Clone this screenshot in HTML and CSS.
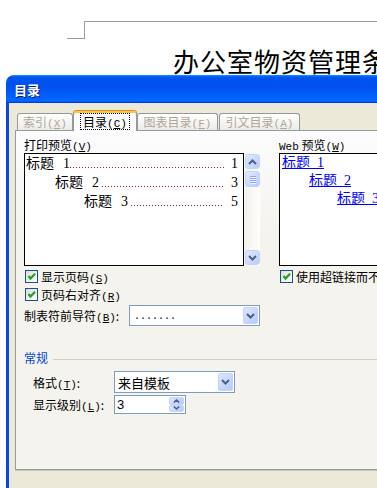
FILE: index.html
```html
<!DOCTYPE html>
<html lang="zh-CN">
<head>
<meta charset="utf-8">
<title>目录</title>
<link rel="stylesheet" href="styles.css">
</head>
<body>
<div class="doc">
  <div class="crop"><div class="crop-corner"></div><div class="crop-line"></div></div>
  <h1 class="doc-title">办公室物资管理条例</h1>
</div>
<div class="dialog">
  <div class="titlebar">目录</div>
  <div class="dlg-body">
    <div class="tabs">
      <div class="tab t1">索引<span class="key">(<u>X</u>)</span></div>
      <div class="tab active"><span class="focus">目录<span class="key">(<u>C</u>)</span></span></div>
      <div class="tab t3">图表目录<span class="key">(<u>F</u>)</span></div>
      <div class="tab t4">引文目录<span class="key">(<u>A</u>)</span></div>
    </div>
    <div class="panel">
      <div class="cols">
        <div class="col-left">
          <div class="label">打印预览<span class="key">(<u>V</u>)</span></div>
          <div class="preview-row">
            <div class="preview">
              <div class="toc l1"><span class="h">标题</span><span class="n">1</span><span class="lead"></span><span class="pg">1</span></div>
              <div class="toc l2"><span class="h">标题</span><span class="n">2</span><span class="lead sp"></span><span class="pg">3</span></div>
              <div class="toc l3"><span class="h">标题</span><span class="n">3</span><span class="lead sp"></span><span class="pg">5</span></div>
            </div>
            <div class="scrollbar">
              <div class="sb-btn"><svg width="9" height="6" viewBox="0 0 9 6"><polyline points="1,5 4.5,1.5 8,5" fill="none" stroke="#4D6185" stroke-width="2"/></svg></div>
              <div class="sb-thumb"><span></span><span></span><span></span><span></span></div>
              <div class="sb-btn sb-down"><svg width="9" height="6" viewBox="0 0 9 6"><polyline points="1,1 4.5,4.5 8,1" fill="none" stroke="#4D6185" stroke-width="2"/></svg></div>
            </div>
          </div>
          <div class="check first">
            <span class="cb"><svg width="11" height="11" viewBox="0 0 11 11"><polyline points="2.5,5 4.5,7.5 9,2.8" fill="none" stroke="#21A121" stroke-width="2.2"/></svg></span>
            <span>显示页码<span class="key">(<u>S</u>)</span></span>
          </div>
          <div class="check">
            <span class="cb"><svg width="11" height="11" viewBox="0 0 11 11"><polyline points="2.5,5 4.5,7.5 9,2.8" fill="none" stroke="#21A121" stroke-width="2.2"/></svg></span>
            <span>页码右对齐<span class="key">(<u>R</u>)</span></span>
          </div>
          <div class="field-row">
            <span class="field-label">制表符前导符<span class="key">(<u>B</u>)</span>:</span>
            <div class="combo combo-leader">
              <span class="combo-text dots">.......</span>
              <span class="combo-btn"><svg width="9" height="6" viewBox="0 0 9 6"><polyline points="1,1 4.5,4.5 8,1" fill="none" stroke="#4D6185" stroke-width="2"/></svg></span>
            </div>
          </div>
        </div>
        <div class="vsep"></div>
        <div class="col-right">
          <div class="label"><span class="mono">Web</span> 预览<span class="key">(<u>W</u>)</span></div>
          <div class="web-preview">
            <div class="web w1"><span class="link">标题&nbsp;&nbsp;1</span></div>
            <div class="web w2"><span class="link">标题&nbsp;&nbsp;2</span></div>
            <div class="web w3"><span class="link">标题&nbsp;&nbsp;3</span></div>
          </div>
          <div class="check first">
            <span class="cb"><svg width="11" height="11" viewBox="0 0 11 11"><polyline points="2.5,5 4.5,7.5 9,2.8" fill="none" stroke="#21A121" stroke-width="2.2"/></svg></span>
            <span>使用超链接而不使用页码<span class="key">(<u>H</u>)</span></span>
          </div>
        </div>
      </div>
      <div class="group">
        <div class="group-head"><span class="group-title">常规</span><span class="rule"></span></div>
        <div class="form-row r1">
          <span class="flabel">格式<span class="key">(<u>T</u>)</span>:</span>
          <div class="combo combo-format">
            <span class="combo-text big">来自模板</span>
            <span class="combo-btn"><svg width="9" height="6" viewBox="0 0 9 6"><polyline points="1,1 4.5,4.5 8,1" fill="none" stroke="#4D6185" stroke-width="2"/></svg></span>
          </div>
        </div>
        <div class="form-row r2">
          <span class="flabel">显示级别<span class="key">(<u>L</u>)</span>:</span>
          <div class="combo spin">
            <span class="combo-text num">3</span>
            <span class="spin-btns">
              <span class="spin-btn"><svg width="7" height="4" viewBox="0 0 7 4"><polyline points="0.8,3.5 3.5,1 6.2,3.5" fill="none" stroke="#4D6185" stroke-width="1.6"/></svg></span>
              <span class="spin-btn"><svg width="7" height="4" viewBox="0 0 7 4"><polyline points="0.8,0.5 3.5,3 6.2,0.5" fill="none" stroke="#4D6185" stroke-width="1.6"/></svg></span>
            </span>
          </div>
        </div>
      </div>
    </div>
  </div>
</div>
</body>
</html>
```
FILE: styles.css
```css
* { box-sizing: border-box; }
html, body { margin: 0; padding: 0; overflow: hidden; }
body {
  width: 377px;
  height: 488px;
  background: #fff;
  font-family: "Noto Sans CJK SC", sans-serif;
  font-size: 12px;
  color: #000;
}
u { text-decoration: underline; }
.key { font-family: "Liberation Mono", "Noto Sans CJK SC", monospace; font-size: 11px; }
.mono { font-family: "Liberation Mono", monospace; font-size: 11px; }

/* document behind the dialog */
.doc { height: 75px; }
.crop { display: flex; padding: 21px 0 0 67px; }
.crop-corner {
  width: 18px; height: 18px;
  border-right: 1px solid #9c9c9c;
  border-bottom: 1px solid #9c9c9c;
}
.crop-line { flex: 1; border-top: 1px solid #9c9c9c; }
.doc-title {
  margin: 9px 0 0 173px;
  font-size: 26px;
  line-height: 26px;
  font-weight: normal;
  letter-spacing: 1px;
  white-space: nowrap;
}

/* dialog */
.dialog { margin-left: 6px; width: 440px; }
.titlebar {
  height: 28px;
  border-radius: 8px 8px 0 0;
  background: linear-gradient(180deg, #0997ff, #0053ee 8%, #0050ee 40%, #0066ff 88%, #0066ff 93%, #005bff 95%, #003dd7 96%, #003dd7);
  color: #fff;
  font-weight: bold;
  font-size: 13px;
  line-height: 28px;
  padding: 1px 0 0 8px;
  text-shadow: 1px 1px 0 #0a1883;
}
.dlg-body {
  height: 385px;
  background: #ECE9D8;
  border-left: 3px solid #0846E6;
  padding: 7px 0 0 6px;
}

/* tabs */
.tabs {
  display: flex;
  align-items: flex-end;
  height: 21px;
  padding-left: 2px;
  margin-bottom: -1px;
  position: relative;
  z-index: 1;
}
.tab {
  height: 17px;
  margin-bottom: 1px;
  border: 1px solid #919B9C;
  border-bottom: 0;
  border-radius: 3px 3px 0 0;
  background: linear-gradient(#ffffff, #ECEBE5);
  color: #ACA899;
  line-height: 16px;
  text-align: center;
  white-space: nowrap;
}
.t1 { width: 56px; }
.t3 { width: 81px; }
.t4 { width: 81px; margin-left: 1px; }
.tab.active {
  width: 64px;
  height: 21px;
  margin-bottom: 0;
  border-top: 1px solid #E68B2C;
  box-shadow: inset 0 2px 0 #FFC73C;
  background: #FCFCFE;
  color: #000;
  padding-top: 2px;
  line-height: 16px;
}
.focus {
  display: inline-block;
  height: 17px;
  padding: 0 2px;
  border: 1px dotted #000;
  line-height: 15px;
}

/* panel */
.panel {
  height: 340px;
  border: 1px solid #919B9C;
  background: linear-gradient(#FCFCFE, #F4F3EE 30%, #F4F3EE);
  box-shadow: 0 1px 0 #C9C7BA;
  padding: 7px 0 0 8px;
}
.cols { display: flex; align-items: flex-start; }
.col-left { width: 236px; }
.label { height: 14px; line-height: 14px; white-space: nowrap; }
.preview-row { display: flex; height: 113px; margin-top: 1px; }
.preview {
  width: 220px;
  border: 1px solid #000;
  background: #fff;
}
.toc {
  display: flex;
  align-items: baseline;
  height: 19px;
  line-height: 19px;
  font-size: 14px;
  font-family: "Liberation Serif", "Noto Sans CJK SC", serif;
  padding-right: 5px;
  color: #000;
}
.l1 { padding-left: 1px; }
.l2 { padding-left: 30px; }
.l3 { padding-left: 59px; }
.toc .h { margin-right: 9px; }
.toc .lead {
  flex: 1;
  height: 1px;
  margin: 0 7px 0 0;
  background: repeating-linear-gradient(to right, #9b1c1c 0 1px, transparent 1px 3px);
}
.toc .lead.sp { margin-left: 3px; }

.scrollbar {
  width: 15px;
  margin-left: 1px;
  padding: 1px 0;
  display: flex;
  flex-direction: column;
  background: linear-gradient(to right, #F3F1EC, #FEFEFB);
}
.sb-btn, .sb-thumb {
  height: 15px;
  border: 1px solid #C3D3FD;
  border-radius: 3px;
  background: linear-gradient(135deg, #E0E9FE, #B9CDFB);
  display: flex;
  align-items: center;
  justify-content: center;
}
.sb-thumb {
  height: 16px;
  margin-top: 2px;
  flex-direction: column;
  gap: 1px;
}
.sb-thumb span { width: 6px; height: 1px; background: #8CA8EC; box-shadow: 0 1px 0 #EEF4FE; }
.sb-down { margin-top: auto; }

.check {
  display: flex;
  align-items: center;
  height: 18px;
  white-space: nowrap;
}
.check.first { margin-top: 1px; }
.cb {
  width: 13px;
  height: 13px;
  margin: 0 3px 0 1px;
  border: 1px solid #1C5180;
  background: linear-gradient(135deg, #DCDCD7, #ffffff);
  display: flex;
  align-items: center;
  justify-content: center;
  flex: none;
}
.field-row { display: flex; align-items: center; margin-top: 2px; }
.field-label { width: 105px; white-space: nowrap; }

.combo {
  display: flex;
  align-items: stretch;
  border: 1px solid #7F9DB9;
  background: #fff;
  padding: 1px;
}
.combo-text { flex: 1; padding-left: 3px; display: flex; align-items: center; white-space: nowrap; color: #000; }
.combo-text.dots { font-family: "Liberation Mono", monospace; font-size: 10px; padding-top: 2px; color: #000; }
.combo-text.big { font-size: 13px; padding-left: 2px; }
.combo-text.num { font-family: "Liberation Sans", sans-serif; font-size: 13px; padding-left: 1px; }
.combo-btn {
  width: 15px;
  border: 1px solid #C3D3FD;
  border-radius: 2px;
  background: linear-gradient(135deg, #DDE7FE, #B4C9FA);
  display: flex;
  align-items: center;
  justify-content: center;
}
.combo-leader { width: 131px; height: 21px; }
.combo-format { width: 121px; height: 22px; }
.spin { width: 72px; height: 19px; }
.spin-btns { width: 15px; display: flex; flex-direction: column; }
.spin-btn {
  flex: 1;
  border: 1px solid #C3D3FD;
  border-radius: 2px;
  background: linear-gradient(135deg, #DDE7FE, #B4C9FA);
  display: flex;
  align-items: center;
  justify-content: center;
}

.vsep {
  width: 1px;
  height: 210px;
  margin: 2px 0 0 9px;
  background: #A7A6A0;
  box-shadow: 1px 0 0 #ffffff;
}
.col-right { flex: 1; margin-left: 10px; }
.web-preview {
  height: 113px;
  margin-top: 1px;
  border: 1px solid #000;
  border-right: 0;
  background: #fff;
}
.web {
  height: 18px;
  line-height: 18px;
  font-size: 14px;
  font-family: "Liberation Serif", "Noto Sans CJK SC", serif;
  white-space: nowrap;
}
.link { color: #0000FF; text-decoration: underline; }
.w1 { padding-left: 2px; }
.w2 { padding-left: 29px; }
.w3 { padding-left: 57px; }

/* group */
.group-head { display: flex; align-items: center; height: 14px; margin-top: 1px; line-height: 14px; }
.group-title { color: #0046D5; }
.rule { flex: 1; height: 1px; margin: 2px 0 0 5px; background: #D0D0BF; }
.form-row { display: flex; align-items: center; padding-left: 9px; }
.form-row.r1 { margin-top: 6px; }
.form-row.r2 { margin-top: 2px; }
.flabel { width: 81px; white-space: nowrap; }
```
